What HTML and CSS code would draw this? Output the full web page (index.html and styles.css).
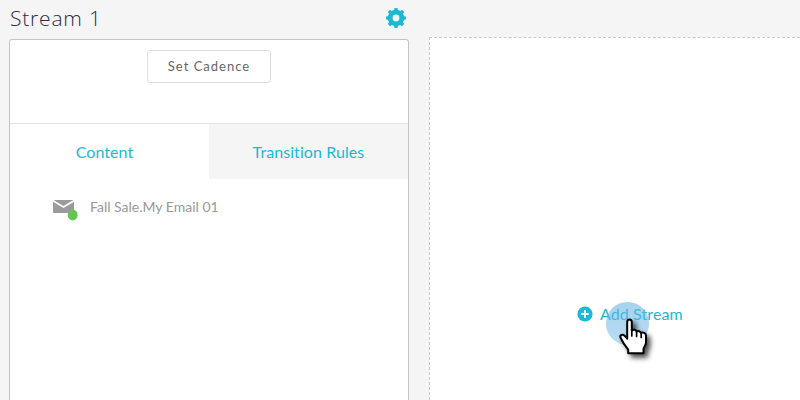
FILE: index.html
```
<!DOCTYPE html>
<html lang="en">
<head>
<meta charset="utf-8">
<title>Streams</title>
<link rel="stylesheet" href="styles.css">
</head>
<body>
<main class="board">
  <section class="stream">
    <header class="stream-head">
      <h1>Stream 1</h1>
      <svg class="gear" viewBox="0 0 20 20" width="20" height="20" aria-label="Settings">
        <g fill="#1cb8d4">
          <rect x="8.200" y="0" width="3.600" height="20" rx="1"/>
          <rect x="8.200" y="0" width="3.600" height="20" rx="1" transform="rotate(45 10 10)"/>
          <rect x="8.200" y="0" width="3.600" height="20" rx="1" transform="rotate(90 10 10)"/>
          <rect x="8.200" y="0" width="3.600" height="20" rx="1" transform="rotate(135 10 10)"/>
          <circle cx="10" cy="10" r="8.3"/>
        </g>
        <circle cx="10" cy="10" r="3.4" fill="#f5f5f5"/>
      </svg>
    </header>
    <div class="card">
      <div class="cadence"><button class="cadence-button">Set Cadence</button></div>
      <nav class="tabs">
        <a class="tab">Content</a>
        <a class="tab tab-muted">Transition Rules</a>
      </nav>
      <div class="item">
        <svg class="mail" viewBox="0 0 26 23" width="26" height="23">
          <rect x="0" y="2" width="21" height="13" rx="1" fill="#9b9b9b"/>
          <path d="M0 2.800 10.500 9 21 2.800" fill="none" stroke="#fff" stroke-width="1.700"/>
          <ellipse cx="19.7" cy="17" rx="5" ry="5.4" fill="#64c64f"/>
        </svg>
        <span class="item-name">Fall Sale.My Email 01</span>
      </div>
    </div>
  </section>
  <section class="new-stream">
    <a class="add">
      <svg viewBox="0 0 16 16" width="16" height="16">
        <circle cx="8" cy="8" r="7.6" fill="#1cb8d4"/>
        <path d="M8 4.3v7.4M4.3 8h7.4" stroke="#fff" stroke-width="2"/>
      </svg>
      <span>Add Stream</span>
    </a>
  </section>
</main>
<svg class="pointer" viewBox="0 0 60 70" width="60" height="70">
  <defs>
    <filter id="soft" x="-50%" y="-50%" width="200%" height="200%">
      <feDropShadow dx="3.5" dy="3.5" stdDeviation="2.8" flood-color="#000" flood-opacity=".7"/>
    </filter>
    <linearGradient id="tap" x1="0" y1="0" x2="0" y2="1">
      <stop offset="0" stop-color="#64b2e2" stop-opacity=".58"/>
      <stop offset="1" stop-color="#64b2e2" stop-opacity=".44"/>
    </linearGradient>
  </defs>
  <circle cx="27.5" cy="23.5" r="21.6" fill="url(#tap)"/>
  <path filter="url(#soft)" d="M28.200 53.200v-3.500l-4-5.500c-1.500-2.500-2.700-4.500-3.700-6.700-1-2.300 2-3.800 4-1.800l2.700 3V22.200c0-3.500 4.600-3.500 4.600 0v8.300c1.200-1.300 4.200-.8 4.700 1 1.400-1 4-.3 4.500 1.500 1.800-1 5 0 5 2.500v7c0 2.500-2.500 4.500-2.500 7.200v3.500z" fill="#fff" stroke="#000" stroke-width="2" stroke-linejoin="round"/>
  <path d="M31.800 30.500v5.500M36.600 32v4.500M41.200 33.500v4" stroke="#000" stroke-width="1.7" stroke-linecap="round"/>
</svg>
</body>
</html>
```
FILE: styles.css
```
* { box-sizing: border-box; }
body {
  margin: 0;
  height: 400px;
  overflow: hidden;
  position: relative;
  background: #f5f5f5;
  font-family: Lato, sans-serif;
  font-variant-ligatures: none;
}
.board { display: flex; gap: 20px; height: 400px; padding-left: 9px; }
.stream { width: 400px; flex: none; display: flex; flex-direction: column; }
.stream-head {
  height: 39px;
  flex: none;
  display: flex;
  justify-content: space-between;
  padding: 8px 3.5px 0 1px;
}
h1 {
  margin: -1px 0 0;
  font-family: "Open Sans", sans-serif;
  font-size: 21px;
  line-height: 22px;
  font-weight: 300;
  letter-spacing: .8px;
  color: #2c2b44;
}
.card {
  flex: 1;
  background: #fff;
  border: 1px solid #c4c4c4;
  border-bottom: 0;
  border-radius: 3px 3px 0 0;
}
.cadence { height: 83px; padding-top: 10px; text-align: center; }
.cadence-button {
  width: 124px;
  height: 33px;
  padding: 0;
  border: 1px solid #dedede;
  border-radius: 3px;
  background: #fff;
  font: 13px/31px Lato, sans-serif;
  letter-spacing: 1px;
  color: #666;
}
.tabs {
  height: 56px;
  display: grid;
  grid-template: 55px / 199px 1fr;
  border-top: 1px solid #e2e2ec;
}
.tab {
  padding-right: 10px;
  text-align: center;
  font-size: 16px;
  line-height: 56px;
  letter-spacing: .08px;
  color: #1cb8d4;
}
.tab-muted { padding-right: 0; background: #f5f5f5; }
.item { display: flex; gap: 11px; padding: 19px 0 0 43px; }
.mail { flex: none; }
.item-name { font-size: 14px; line-height: 18px; color: #999; }
.new-stream {
  flex: 1;
  margin-top: 37px;
  padding: 266px 0 0 147px;
  background: #fff;
  border-top: 1px dashed #c8c8c8;
  border-left: 1px dashed #c8c8c8;
}
.add {
  display: flex;
  align-items: center;
  gap: 7px;
  font-size: 16px;
  line-height: 20px;
  letter-spacing: .1px;
  color: #1cb8d4;
}
.pointer { position: absolute; left: 600px; top: 300px; }
```
